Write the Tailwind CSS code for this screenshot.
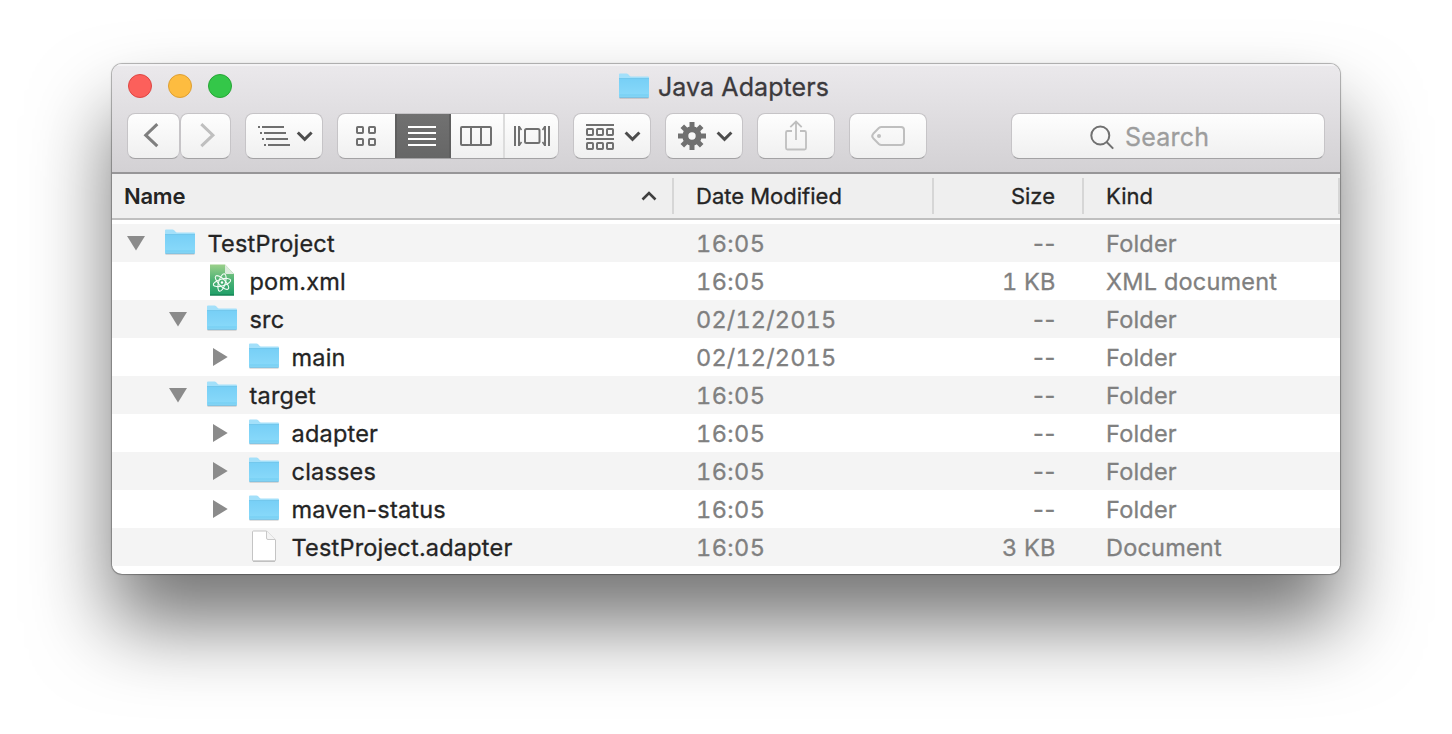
<!DOCTYPE html>
<html lang="en">
<head>
<meta charset="utf-8">
<title>Java Adapters</title>
<script src="https://cdn.jsdelivr.net/npm/@tailwindcss/browser@4"></script>
</head>
<body class="bg-white overflow-hidden h-[734px] px-28 pt-16 font-['Inter','Liberation_Sans',sans-serif] [-webkit-text-stroke:0.3px]">
<svg class="absolute size-0">
  <defs>
    <linearGradient id="fg" x1="0" y1="0" x2="0" y2="1"><stop offset="0" stop-color="#77cff6"/><stop offset="1" stop-color="#8adafa"/></linearGradient>
    <linearGradient id="ag" x1="0" y1="0" x2="0" y2="1"><stop offset="0" stop-color="#9bd08a"/><stop offset=".5" stop-color="#4fb375"/><stop offset="1" stop-color="#1d9e68"/></linearGradient>
    <symbol id="folder" viewBox="0 0 32 26">
      <path d="M1.500 25.200h29" stroke="#000" stroke-opacity=".18" stroke-width="1"/>
      <path d="M1 1.500Q1 .5 2 .5h6.500q1 0 1.700.8l1.600 1.700q.4.4 1 .4H30q1 0 1 1V24H1z" fill="#a3e0fa"/>
      <path d="M1 5.500h30V23.500q0 1-1 1H2q-1 0-1-1z" fill="url(#fg)"/>
      <path d="M1 5.500h30" stroke="#6cc4ea" stroke-width=".8"/>
      <path d="M1.500 22h29" stroke="#6cc9ef" stroke-width=".8"/>
      <path d="M1.300 24.300h29.400" stroke="#5fb4dc" stroke-width=".8"/>
    </symbol>
    <symbol id="atom" viewBox="0 0 26 32">
      <path d="M1 .5h15L25 10v21.500H1z" fill="url(#ag)"/>
      <path d="M1 31h24" stroke="#12794d" stroke-width="1"/>
      <path d="M16 .5L25 10h-7.500q-1.500 0-1.500-1.500z" fill="#dcebdc"/>
      <g fill="none" stroke="#f2fbf5" stroke-width="1.100"><ellipse cx="13" cy="18.500" rx="9" ry="3.400" transform="rotate(-16 13 18.500)"/><ellipse cx="13" cy="18.500" rx="9" ry="3.400" transform="rotate(46 13 18.500)"/><ellipse cx="13" cy="18.500" rx="9" ry="3.400" transform="rotate(106 13 18.500)"/></g>
      <circle cx="13" cy="18.500" r="1.200" fill="#fff"/>
    </symbol>
    <symbol id="doc" viewBox="0 0 26 32">
      <path d="M1.500 2q0-1 1-1H15.500L24.500 10V30q0 1-1 1h-21q-1 0-1-1z" fill="#fff" stroke="#c4c4c4"/>
      <path d="M15.500 1V8q0 1.500 1.500 1.500h7" fill="#f4f4f4" stroke="#c9c9c9"/>
      <path d="M2 31.200h22" stroke="#a9a9a9" stroke-width=".8"/>
    </symbol>
    <symbol id="open" viewBox="0 0 18 18"><path d="M0 2h18L9 16.500z" fill="#8b8b8b"/></symbol>
    <symbol id="closed" viewBox="0 0 18 18"><path d="M2 0l14.700 9L2 18z" fill="#8b8b8b"/></symbol>
  </defs>
</svg>

<div class="w-[1228px] h-[510px] rounded-[10px] overflow-hidden bg-white flex flex-col shadow-[0_0_0_1px_rgba(0,0,0,.22),0_0_3px_rgba(0,0,0,.2),0_50px_80px_rgba(0,0,0,.55)]">
  <header class="h-[110px] shrink-0 border-b-2 border-[#979698] bg-linear-to-b from-[#ebe9ec] to-[#d3d1d4] shadow-[inset_0_2px_0_#f4f3f5] flex flex-col">
    <div class="h-[49px] flex items-center">
      <div class="flex gap-4 pl-4 -mt-[5px]">
        <i class="size-6 rounded-full bg-[#fc605b] border border-[#dd4643]"></i>
        <i class="size-6 rounded-full bg-[#fdbc40] border border-[#dd9f33]"></i>
        <i class="size-6 rounded-full bg-[#34c749] border border-[#27a536]"></i>
      </div>
      <div class="flex items-center ml-[386px] -mt-[3px]">
        <svg class="w-8 h-[26px] -mt-0.5"><use href="#folder"/></svg>
        <h1 class="ml-2 text-[25px] leading-none text-[#3c3a3d] whitespace-nowrap tracking-[0.08px]">Java Adapters</h1>
      </div>
    </div>
    <div class="flex pl-[15px] pr-[15px] [&>*]:h-[46px] [&>*]:shrink-0 [&>*]:rounded-[8px] [&>*]:border [&>*]:border-[#c6c4c7] [&>*]:border-b-[#a3a2a4] [&>*]:bg-linear-to-b [&>*]:from-[#fefefe] [&>*]:to-[#f0f0f0] [&>*]:overflow-hidden">
      <div class="w-[53px]"><svg class="size-full" viewBox="128 114 51 44" fill="none" stroke="#7f7f7f" stroke-width="3"><path d="M157.300 124.200L145.700 135.200l11.600 11"/></svg></div>
      <div class="w-[51px]"><svg class="size-full" viewBox="181 114 49 44" fill="none" stroke="#bfbfbf" stroke-width="3"><path d="M201.300 124.200l11.600 11-11.600 11"/></svg></div>
      <div class="w-[78px] ml-[14px]"><svg class="size-full" viewBox="246 114 76 44" fill="none" stroke="#6f6f6f" stroke-width="2"><path d="M258 127h2m2 0h22M260 133h2m2 0h22M262 139h2m2 0h22M264 145h2m2 0h22"/><path d="M297.800 132.500l6.900 6.800 6.900-6.800" stroke="#4d4d4d" stroke-width="3"/></svg></div>
      <div class="w-[222px] ml-[14px] flex">
        <svg class="w-[57px] h-full shrink-0" viewBox="338 114 57 44" fill="none" stroke="#707070" stroke-width="2"><rect x="357" y="127" width="6" height="6" rx=".7"/><rect x="369" y="127" width="6" height="6" rx=".7"/><rect x="357" y="139" width="6" height="6" rx=".7"/><rect x="369" y="139" width="6" height="6" rx=".7"/></svg>
        <svg class="w-14 h-[46px] -mt-px shrink-0 bg-linear-to-b from-[#717171] to-[#666] border-x-2 border-[#5f5f5f]" viewBox="397 113 52 46" stroke="#fff" stroke-width="2"><path d="M408 127h28M408 133h28M408 139h28M408 145h28"/></svg>
        <svg class="w-[54px] h-full shrink-0 border-r-2 border-[#dcdcdc]" viewBox="451 114 52 44" fill="none" stroke="#707070" stroke-width="2"><rect x="461" y="127" width="30" height="18" rx="1"/><path d="M471 127v18M481 127v18"/></svg>
        <svg class="w-[53px] h-full shrink-0" viewBox="505 114 53 44" fill="none" stroke="#707070" stroke-width="2"><path d="M515 126v20M519 126v20M545 126v20M549 126v20" /><path d="M519.500 127l2 3M519.500 145l2-3M544.500 127l-2 3M544.500 145l-2-3" stroke-width="1.500"/><rect x="525" y="129" width="14.500" height="14" rx="1.500"/></svg>
      </div>
      <div class="w-[78px] ml-[14px]"><svg class="size-full" viewBox="574 114 76 44" fill="none" stroke="#707070" stroke-width="2"><path d="M586 125h28M586 139h28"/><rect x="587" y="129" width="6" height="6" rx=".7"/><rect x="597" y="129" width="6" height="6" rx=".7"/><rect x="607" y="129" width="6" height="6" rx=".7"/><rect x="587" y="143" width="6" height="6" rx=".7"/><rect x="597" y="143" width="6" height="6" rx=".7"/><rect x="607" y="143" width="6" height="6" rx=".7"/><path d="M625.600 132.500l6.900 6.800 6.900-6.800" stroke="#4d4d4d" stroke-width="3"/></svg></div>
      <div class="w-[78px] ml-[14px]"><svg class="size-full" viewBox="666 114 76 44" fill="none" stroke="#707070"><circle cx="692" cy="136" r="6.700" stroke-width="6"/><g stroke-width="5"><path d="M692 122v6M692 144v6M678 136h6M700 136h6"/><path d="M682.300 126.300l4 4M697.700 141.700l4 4M682.300 145.700l4-4M697.700 130.300l4-4"/></g><path d="M717.600 132.500l6.900 6.800 6.900-6.800" stroke="#4d4d4d" stroke-width="3"/></svg></div>
      <div class="w-[78px] ml-[14px]"><svg class="size-full" viewBox="758 114 76 44" fill="none" stroke="#bfbfbf" stroke-width="1.800"><path d="M792 131h-4.500q-1.500 0-1.500 1.500V148q0 1.500 1.500 1.500h17q1.500 0 1.500-1.500V132.500q0-1.500-1.500-1.500H800M796 140V121.500M790.300 127.200L796 121.500l5.700 5.700"/></svg></div>
      <div class="w-[78px] ml-[14px]"><svg class="size-full" viewBox="850 114 76 44" fill="none" stroke="#bfbfbf" stroke-width="2"><path d="M881.500 127H901q3 0 3 3v12q0 3-3 3H881.500q-1.500 0-2.700-1l-5.600-5.800q-2-2.200 0-4.400l5.600-5.800q1.200-1 2.700-1z"/><circle cx="879" cy="136" r="2" fill="#bfbfbf" stroke="none"/></svg></div>
      <div class="w-[314px] ml-[84px] flex items-center"><svg class="w-[113px] h-full shrink-0" viewBox="1012 114 113 44" fill="none" stroke="#707070" stroke-width="2"><circle cx="1100.300" cy="135.500" r="9"/><path d="M1106.600 142l6.600 6.600"/></svg><span class="text-[25px] leading-none text-[#9d9d9d] mt-[3px] tracking-[0.2px]">Search</span></div>
    </div>
  </header>

  <div class="h-[46px] shrink-0 flex items-center bg-[#efefef] border-b-2 border-[#bfbfbf] text-[22px] leading-none text-[#242424] [&>div]:h-9 [&>div]:border-r-2 [&>div]:border-[#d6d6d6] [&>div]:flex [&>div]:items-center [&>div]:shrink-0">
    <div class="w-[562px] pl-3 pr-[15px] justify-between font-semibold"><span class="tracking-[-0.25px] [-webkit-text-stroke:0]">Name</span><svg class="w-4 h-3" fill="none" stroke="#3f3f3f" stroke-width="2.600"><path d="M1.500 9.500L8 3l6.500 6.500"/></svg></div>
    <div class="w-[260px] pl-[22px]"><span>Date Modified</span></div>
    <div class="w-[150px] pr-[27px] justify-end"><span>Size</span></div>
    <div class="w-64 pl-[22px]"><span>Kind</span></div>
  </div>
  <main id="rows" class="pt-1 text-[23.5px] leading-none tracking-[0.2px]"></main>
</div>
<script>
const rows = [
  [0, 'open', 'folder', 'TestProject', '16:05', '--', 'Folder'],
  [1, '', 'atom', 'pom.xml', '16:05', '1 KB', 'XML document'],
  [1, 'open', 'folder', 'src', '02/12/2015', '--', 'Folder'],
  [2, 'closed', 'folder', 'main', '02/12/2015', '--', 'Folder'],
  [1, 'open', 'folder', 'target', '16:05', '--', 'Folder'],
  [2, 'closed', 'folder', 'adapter', '16:05', '--', 'Folder'],
  [2, 'closed', 'folder', 'classes', '16:05', '--', 'Folder'],
  [2, 'closed', 'folder', 'maven-status', '16:05', '--', 'Folder'],
  [2, '', 'doc', 'TestProject.adapter', '16:05', '3 KB', 'Document'],
];
const pad = ['pl-[15px]', 'pl-[57px]', 'pl-[99px]'];
document.getElementById('rows').innerHTML = rows.map(([lvl, arrow, icon, name, date, size, kind]) => `
  <div class="h-[38px] flex items-center odd:bg-[#f4f4f4] text-[#808080] whitespace-nowrap">
    <div class="w-[584px] flex items-center text-[#242424] ${pad[lvl]}">
      <svg class="size-[18px]">${arrow ? `<use href="#${arrow}"/>` : ''}</svg>
      <span class="w-8 ml-[19px] flex justify-center">${icon === 'folder' ? '<svg class="w-8 h-[26px] -mt-0.5"><use href="#folder"/></svg>' : `<svg class="w-[26px] h-8 -mt-[3px]"><use href="#${icon}"/></svg>`}</span>
      <span class="ml-[11.5px] pt-px">${name}</span>
    </div>
    <div class="w-60 pt-px tabular-nums ${date.length > 5 ? 'tracking-[0.15px]' : 'tracking-[0.4px]'}">${date}</div>
    <div class="w-[120px] pt-px text-right ${size === '--' ? 'tracking-[0.7px]' : 'tabular-nums pr-[0.5px]'}">${size}</div>
    <div class="ml-[50px] pt-px">${kind}</div>
  </div>`).join('');
</script>
</body>
</html>
